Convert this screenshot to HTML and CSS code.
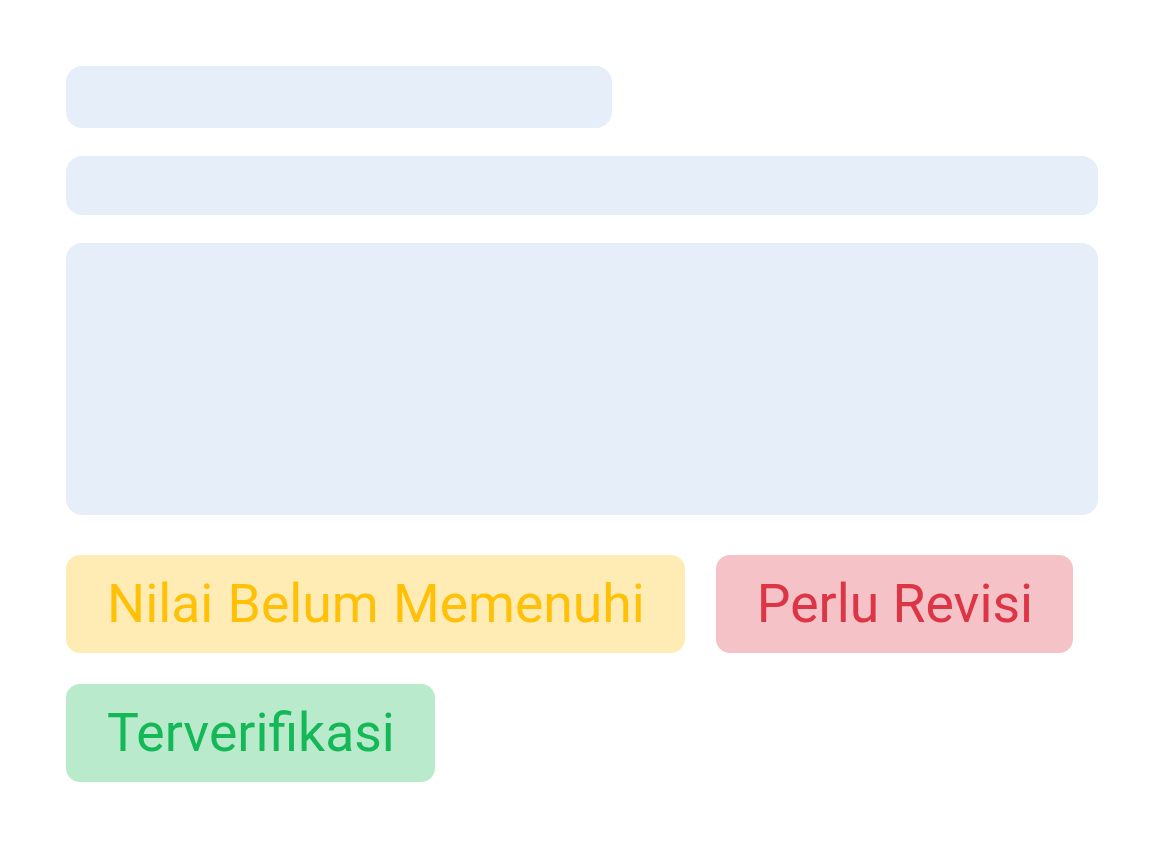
FILE: index.html
```html
<!DOCTYPE html>
<html lang="id">
<head>
<meta charset="utf-8">
<title>Status</title>
<link rel="stylesheet" href="styles.css">
</head>
<body>
<main class="page">
  <div class="skeleton skeleton-title"></div>
  <div class="skeleton skeleton-line"></div>
  <div class="skeleton skeleton-block"></div>
  <div class="badges">
    <span class="badge badge-warning">Nilai Belum Memenuhi</span>
    <span class="badge badge-danger">Perlu Revisi</span>
    <span class="badge badge-success">Terverifikasi</span>
  </div>
</main>
</body>
</html>
```

FILE: styles.css
```css
html, body {
  margin: 0;
  padding: 0;
  background: #ffffff;
}

.page {
  padding: 66px 69px 66px 66px;
  display: flex;
  flex-direction: column;
  font-family: Roboto, "Liberation Sans", sans-serif;
}

.skeleton {
  background: #e6eef9;
  border-radius: 16px;
}

.skeleton-title {
  width: 546px;
  height: 62px;
}

.skeleton-line {
  margin-top: 28px;
  height: 59px;
}

.skeleton-block {
  margin-top: 28px;
  height: 272px;
}

.badges {
  margin-top: 40px;
  display: flex;
  flex-wrap: wrap;
  gap: 31px 31px;
  width: 1032px;
}

.badge {
  display: inline-flex;
  align-items: center;
  height: 98px;
  padding: 0 40px 0 41px;
  border-radius: 14px;
  font-size: 53.5px;
  line-height: 1;
  box-sizing: border-box;
}

.badge-warning {
  background: #ffecb5;
  color: #ffc107;
  word-spacing: 1px;
}

.badge-danger {
  background: #f5c2c7;
  color: #dc3545;
}

.badge-success {
  background: #b9eacc;
  color: #14b856;
}
```
